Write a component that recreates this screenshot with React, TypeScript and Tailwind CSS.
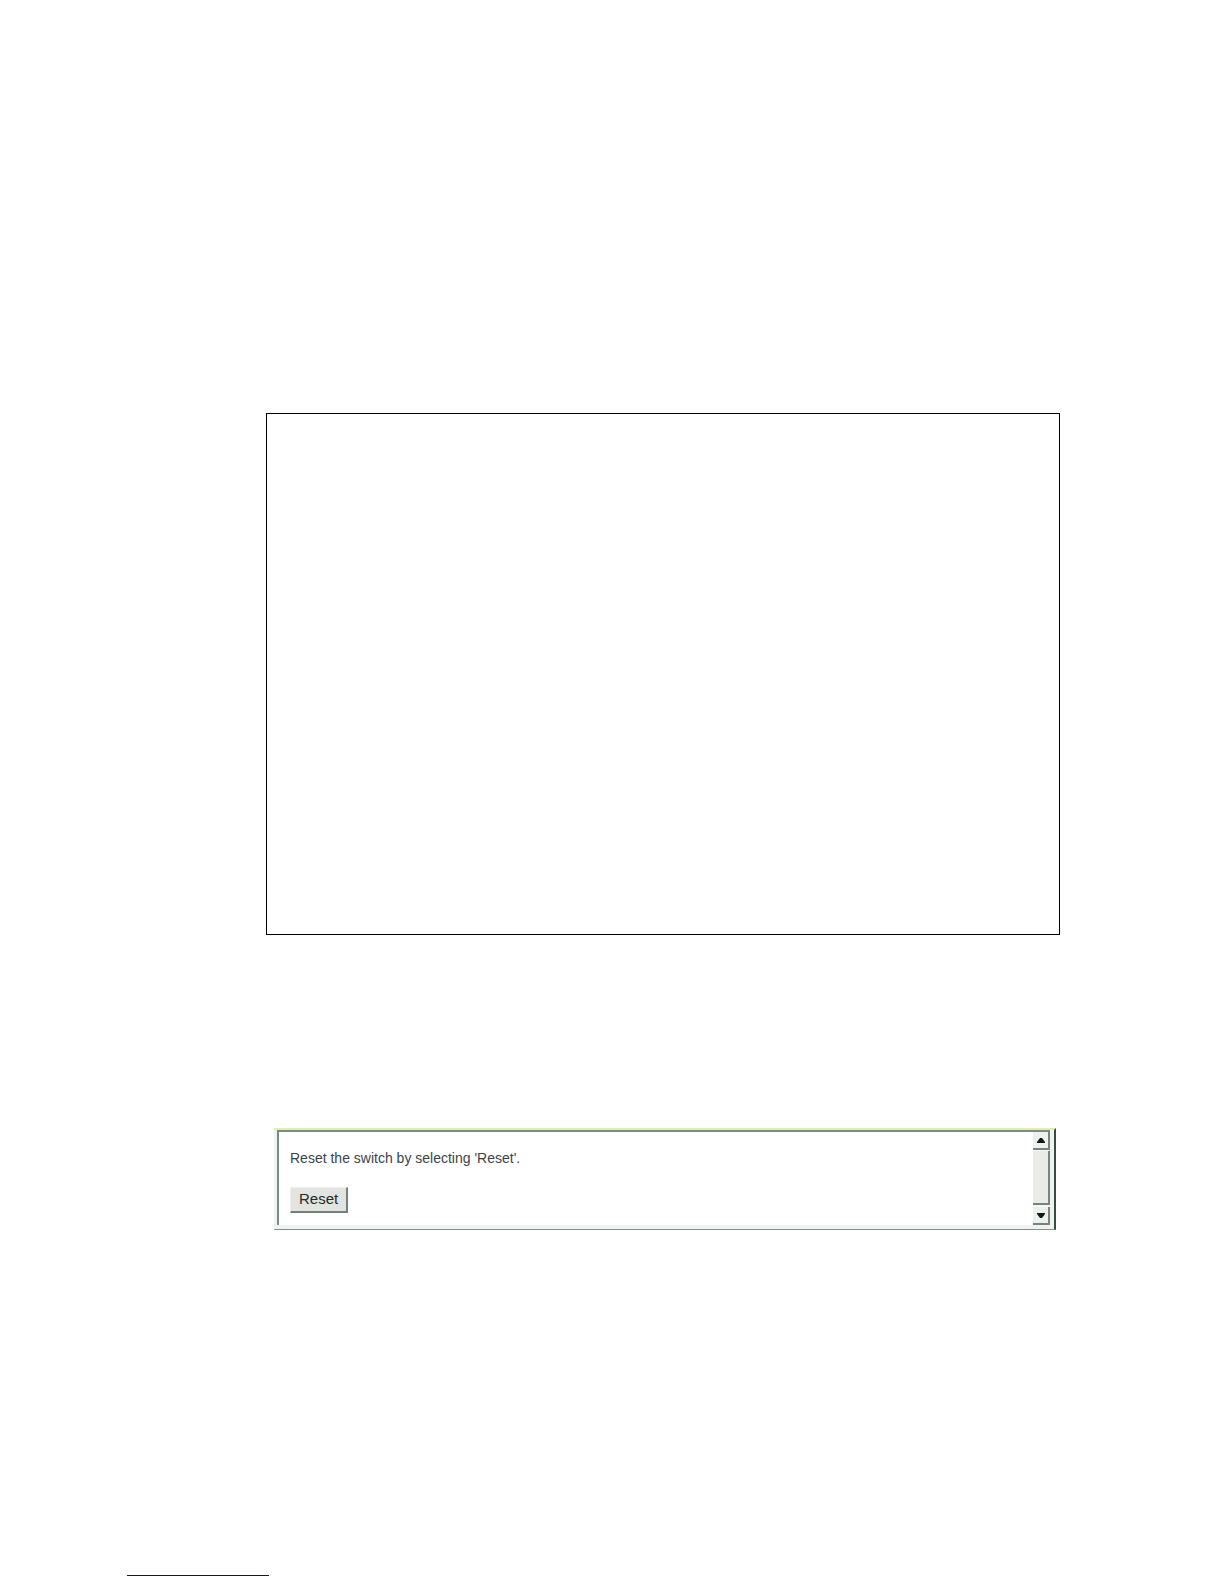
type ArrowProps = { direction: "up" | "down" };

function ScrollArrow({ direction }: ArrowProps) {
  return (
    <button
      type="button"
      aria-label={direction === "up" ? "Scroll up" : "Scroll down"}
      className="flex h-[18px] w-full shrink-0 items-center justify-center border-r-2 border-b-2 border-[#75857e] bg-[#edf1ed]"
    >
      <svg viewBox="0 0 8 5" className="h-[5px] w-2" fill="#101818" aria-hidden="true">
        {direction === "up" ? <path d="M0 5V4L3 0h2l3 4v1z" /> : <path d="M0 0v1l3 4h2l3-4V0z" />}
      </svg>
    </button>
  );
}

function ResetPanel() {
  return (
    <section className="mr-1 ml-2 border-t-2 border-r-2 border-b border-t-[#e0edb8] border-r-[#354d45] border-b-[#84918e] bg-[#f0f4f1] pr-1 pb-1 pl-[3px]">
      <div className="flex border-t-2 border-l-2 border-[#7a8a84] bg-white">
        <div className="flex flex-1 flex-col items-start pt-4 pr-3 pb-3 pl-[11px]">
          <p className="text-sm leading-5 text-[#3c4346]">Reset the switch by selecting 'Reset'.</p>
          <button
            type="button"
            className="mt-[19px] h-[26px] border-t border-r-2 border-b-2 border-l border-t-[#eff1ed] border-r-[#74807b] border-b-[#74807b] border-l-[#eff1ed] bg-[#e2e4df] px-2 pb-0.5 text-[15px] leading-5 text-[#252b2a]"
          >
            Reset
          </button>
        </div>
        <div className="flex w-[17px] flex-col gap-px bg-[#f5f7f5]">
          <ScrollArrow direction="up" />
          <div className="mb-px flex-1 border-r-2 border-b-2 border-[#75857e] bg-[#e9ebe7]" />
          <ScrollArrow direction="down" />
        </div>
      </div>
    </section>
  );
}

export default function App() {
  return (
    <div className="flex min-h-screen flex-col bg-white font-['Liberation_Sans',Arial,sans-serif]">
      <main className="pt-[413px] pr-[164px] pl-[266px]">
        <div className="mb-[193px] h-[522px] border border-black" />
        <ResetPanel />
      </main>
      <footer className="mt-auto pb-2 pl-[127px]">
        <hr className="h-px w-[142px] border-0 bg-[#0c0c80]" />
      </footer>
    </div>
  );
}
